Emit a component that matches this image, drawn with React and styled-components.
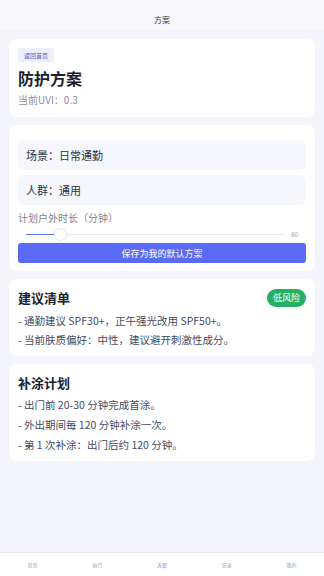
import React, { useState } from "react";
import styled, { createGlobalStyle } from "styled-components";

const GlobalStyle = createGlobalStyle`
  html, body {
    margin: 0;
    padding: 0;
    background: #f4f5fa;
    font-family: "Noto Sans CJK SC", "Noto Sans", Roboto, sans-serif;
  }
  * { box-sizing: border-box; }
`;

const Page = styled.div`
  min-height: 100vh;
  display: flex;
  flex-direction: column;
`;

const Header = styled.div`
  height: 30px;
  background: #f8f8fa;
  display: flex;
  align-items: flex-end;
  justify-content: center;
  padding-bottom: 5px;
  font-size: 8px;
  color: #333;
`;

const Content = styled.div`
  flex: 1;
  padding: 9px 9px 0;
  display: flex;
  flex-direction: column;
  gap: 8px;
`;

const Card = styled.div`
  background: #fff;
  border-radius: 8px;
  padding: ${({ pad }) => pad || "9px"};
  display: flex;
  flex-direction: column;
`;

const BackButton = styled.button`
  align-self: flex-start;
  border: none;
  background: #eceefc;
  color: #5a62c2;
  font-family: inherit;
  font-size: 6px;
  height: 14px;
  padding: 0 6px;
  border-radius: 3px;
`;

const PageTitle = styled.div`
  font-size: 16px;
  font-weight: 700;
  color: #1b1e30;
  margin-top: 5px;
  line-height: 22px;
`;

const Sub = styled.div`
  font-size: 10px;
  color: #8a8e9e;
  margin-top: 3px;
  line-height: 16px;
`;

const Field = styled.div`
  background: #f6f7fc;
  border-radius: 6px;
  height: 30px;
  display: flex;
  align-items: center;
  padding: 0 8px;
  font-size: 11px;
  color: #2f3245;
  & + & {
    margin-top: 5px;
  }
`;

const Label = styled.div`
  font-size: 10px;
  color: #7d8194;
  margin-top: 5px;
  line-height: 16px;
`;

const SliderRow = styled.div`
  display: flex;
  align-items: center;
  height: 14px;
  margin-top: 1px;
  padding: 0 8px;
  gap: 6px;
`;

const Track = styled.div`
  flex: 1;
  height: 1px;
  background: #e6e7ec;
  position: relative;
`;

const Fill = styled.div`
  position: absolute;
  left: 0;
  top: 0;
  height: 1px;
  background: #5c7df0;
`;

const Thumb = styled.div`
  position: absolute;
  top: -6px;
  width: 13px;
  height: 13px;
  border-radius: 50%;
  background: #fff;
  border: 1px solid #ebebef;
  box-shadow: 0 0 2px rgba(0, 0, 0, 0.08);
  margin-left: -6px;
`;

const SliderValue = styled.span`
  font-size: 6px;
  color: #9a9a9a;
`;

const SaveButton = styled.button`
  height: 20px;
  border: none;
  border-radius: 3px;
  background: #5b6af6;
  color: #fff;
  font-family: inherit;
  font-size: 9px;
  margin-top: 2px;
`;

const CardHead = styled.div`
  display: flex;
  align-items: center;
  justify-content: space-between;
`;

const CardTitle = styled.div`
  font-size: 13px;
  font-weight: 700;
  color: #1b1e30;
  line-height: 20px;
`;

const Badge = styled.span`
  background: #27b064;
  color: #fff;
  font-size: 9px;
  height: 18px;
  line-height: 18px;
  padding: 0 6px;
  border-radius: 9px;
`;

const Lines = styled.div`
  margin-top: ${({ top }) => top || "3px"};
  display: flex;
  flex-direction: column;
`;

const Line = styled.div`
  font-size: 10.5px;
  color: #444a60;
  line-height: ${({ lh }) => lh || "19px"};
`;

const TabBar = styled.div`
  height: 24px;
  margin-top: 8px;
  background: #fff;
  border-top: 1px solid #e5e6ea;
  display: grid;
  grid-template-columns: repeat(5, 1fr);
  align-items: center;
`;

const Tab = styled.div`
  text-align: center;
  font-size: 5px;
  color: ${({ active }) => (active ? "#6b6ff5" : "#9a9aa0")};
`;

const tabs = ["首页", "出行", "方案", "记录", "我的"];

export default function App() {
  const [minutes] = useState(60);
  const pct = 13;

  return (
    <Page>
      <GlobalStyle />
      <Header>方案</Header>
      <Content>
        <Card>
          <BackButton>返回首页</BackButton>
          <PageTitle>防护方案</PageTitle>
          <Sub>当前UVI：0.3</Sub>
        </Card>

        <Card pad="15px 9px 8px">
          <Field>场景：日常通勤</Field>
          <Field>人群：通用</Field>
          <Label>计划户外时长（分钟）</Label>
          <SliderRow>
            <Track>
              <Fill style={{ width: `${pct}%` }} />
              <Thumb style={{ left: `${pct}%` }} />
            </Track>
            <SliderValue>{minutes}</SliderValue>
          </SliderRow>
          <SaveButton>保存为我的默认方案</SaveButton>
        </Card>

        <Card pad="9px 9px 7px">
          <CardHead>
            <CardTitle>建议清单</CardTitle>
            <Badge>低风险</Badge>
          </CardHead>
          <Lines>
            <Line>- 通勤建议 SPF30+，正午强光改用 SPF50+。</Line>
            <Line>- 当前肤质偏好：中性，建议避开刺激性成分。</Line>
          </Lines>
        </Card>

        <Card pad="9px 9px 6px">
          <CardTitle>补涂计划</CardTitle>
          <Lines top="2px">
            <Line lh="20px">- 出门前 20-30 分钟完成首涂。</Line>
            <Line lh="20px">- 外出期间每 120 分钟补涂一次。</Line>
            <Line lh="20px">- 第 1 次补涂：出门后约 120 分钟。</Line>
          </Lines>
        </Card>
      </Content>
      <TabBar>
        {tabs.map((t) => (
          <Tab key={t} active={t === "方案"}>
            {t}
          </Tab>
        ))}
      </TabBar>
    </Page>
  );
}
